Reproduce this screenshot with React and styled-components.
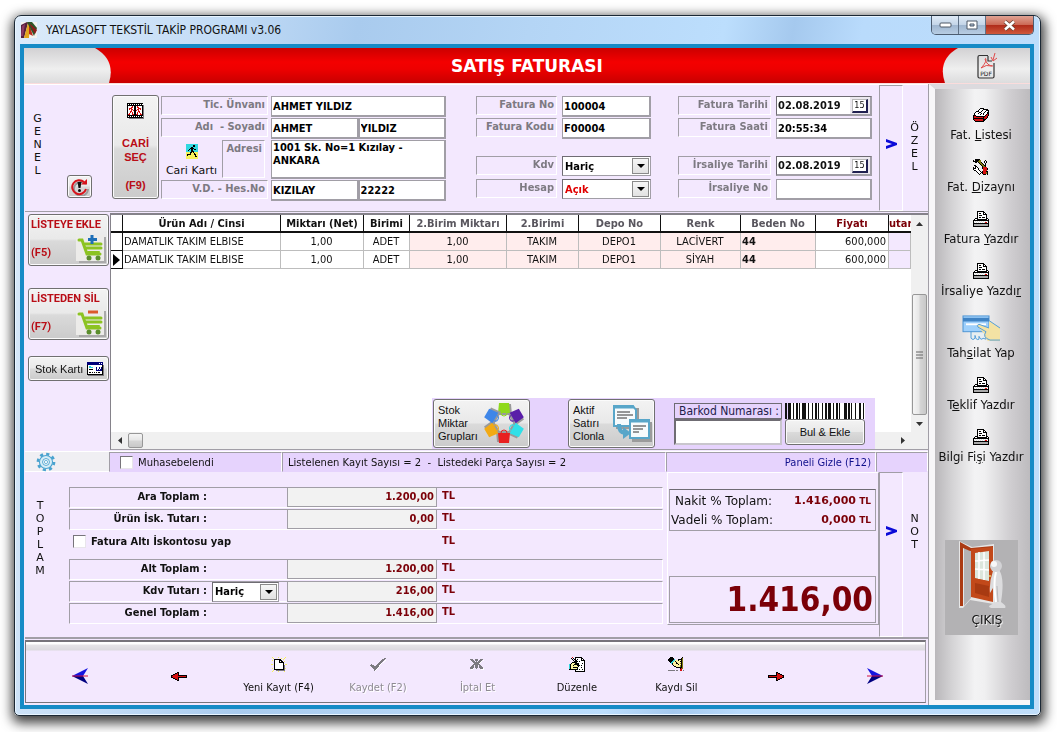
import React from 'react'
import styled, { createGlobalStyle } from 'styled-components'

const tahoma = `'DejaVu Sans Condensed', 'Noto Sans', sans-serif`
const verdana = `'DejaVu Sans', 'Noto Sans', sans-serif`
const arial = `'Liberation Sans', sans-serif`
const narrow = `Roboto, 'Liberation Sans', sans-serif`

const lilac = '#f3e8fe'
const violet = '#e6d3fd'
const line = '#a19ea6'
const maroon = '#7b0008'

const GlobalStyle = createGlobalStyle`
    * {
        box-sizing: border-box;
    }
    body {
        margin: 0;
        padding: 15px 16px 16px 14px;
        background: #fff;
        font-family: ${tahoma};
        font-size: 11px;
        color: #111;
    }
    button, input, select, textarea {
        font: inherit;
        color: inherit;
        margin: 0;
    }
`

/* ---------- window frame ---------- */

const Window = styled.div`
    border: 1px solid #1b2835;
    border-radius: 7px 7px 5px 5px;
    padding: 0 6px 6px 5px;
    background: linear-gradient(100deg, #dcebfa 0, #c3dcf6 18%, #a9cbee 30%, #b4d5f5 45%, #bcdefd 62%, #a5c9ee 68%, #b9dbfc 74%, #c0defa);
    box-shadow: inset 0 0 0 1px #e9f5ff, 1px 4px 12px 3px rgba(0, 0, 0, 0.75);
`

const TitleBar = styled.header`
    display: flex;
    align-items: center;
    height: 28px;
    gap: 9px;
    padding-left: 1px;
`

const WindowTitle = styled.h1`
    flex: 1;
    margin: 0;
    font-size: 12px;
    font-weight: 400;
`

const WindowButtons = styled.div`
    display: flex;
    align-self: flex-start;
    border: 1px solid #4c5c70;
    border-top: 0;
    border-radius: 0 0 5px 5px;
    overflow: hidden;
`

const WindowButton = styled.button`
    display: flex;
    align-items: center;
    justify-content: center;
    width: ${props => props.$close ? '47px' : '27px'};
    height: 18px;
    padding: 0;
    border: 0;
    border-right: ${props => props.$close ? '0' : '1px solid #5f7187'};
    background: ${props => props.$close
        ? 'linear-gradient(#e0a394, #cc6a56 48%, #b02c1a 52%, #d0583c)'
        : 'linear-gradient(#dfeaf6, #c4d5e8 48%, #9fb6d0 52%, #b8cde3)'};
`

const Client = styled.div`
    border: 4px solid #168bc6;
    background: ${lilac};
`

const Banner = styled.div`
    display: flex;
    justify-content: space-between;
    align-items: center;
    height: 36px;
    border-bottom: 1px solid #fbdcdc;
    background: linear-gradient(#cb0000, #f40000 40%, #ee0000 60%, #c80000);
`

const BannerTitle = styled.h2`
    margin: 0;
    font-family: ${verdana};
    font-size: 17px;
    color: #fff;
`

const PdfButton = styled.button`
    padding: 0;
    border: 0;
    background: none;
    display: block;
    height: 35px;
`

const Body = styled.div`
    display: grid;
    grid-template-columns: minmax(0, 1fr) 101px;
`

const Main = styled.main`
    padding-left: 1px;
    border-right: 1px solid ${line};
`

/* ---------- small shared parts ---------- */

const SideWord = styled.div`
    font-family: ${verdana};
    font-size: 11px;
    line-height: 13px;
    text-align: center;
    width: ${props => props.$width};
    padding-top: ${props => props.$top};

    & span {
        display: block;
    }
`

const Fold = styled.button`
    width: 24px;
    padding: 0 0 ${props => props.$lift || '6px'};
    border: 1px solid;
    border-color: ${line} #fff #fff ${line};
    background: ${lilac};
`

const RaisedButton = styled.button`
    border: 1px solid #707070;
    border-radius: 3px;
    background: linear-gradient(#f3f3f3, #e9e9e9 48%, #dadada 52%, #cbcbcb);
    box-shadow: inset 0 0 0 1px #fbfbfb;
    padding: 0;
`

const Caption = styled.label`
    display: block;
    height: ${props => props.$tall ? '38px' : '19px'};
    border: 1px solid;
    border-color: ${line} #fff #fff ${line};
    padding: 0 2px;
    text-align: right;
    font-weight: 700;
    line-height: 16px;
    color: #7d7a82;
    white-space: pre;
`

const TextBox = styled.input`
    width: 100%;
    min-width: 0;
    height: ${props => props.$tall ? '39px' : '21px'};
    border: 1px solid ${line};
    border-width: 1px 2px 2px 1px;
    border-radius: 0;
    background: #fff;
    padding: 0 1px;
    font-weight: 700;
    color: #000;
    line-height: 13px;
    resize: none;
    display: block;
    outline: none;
    overflow: hidden;
`

const SelectWrap = styled.div`
    position: relative;
    width: ${props => props.$width || '100%'};

    & select {
        appearance: none;
        display: block;
        width: 100%;
        height: 20px;
        border: 1px solid;
        border-color: #6f6c73 ${line} ${line} #6f6c73;
        border-radius: 0;
        background: #fff;
        padding: 0 20px 0 2px;
        font-weight: 700;
        color: ${props => props.$red ? '#e00000' : '#000'};
    }
`

const DropArrow = styled.span`
    position: absolute;
    top: 2px;
    right: 2px;
    width: 17px;
    height: 16px;
    border: 1px solid #8a8a8a;
    background: linear-gradient(#f6f6f6, #e2e2e2);
    pointer-events: none;

    &::after {
        content: "";
        position: absolute;
        left: 4px;
        top: 5px;
        border: 4px solid transparent;
        border-top-color: #000;
        border-bottom: 0;
    }
`

const DateBox = styled.div`
    display: flex;
    height: 20px;
    border: 1px solid;
    border-width: 1px 2px 2px 1px;
    border-color: #6f6c73 ${line} ${line} #6f6c73;
    background: #fff;

    & input {
        flex: 1;
        min-width: 0;
        border: 0;
        padding: 0 1px;
        font-weight: 700;
        background: none;
    }
`

const DayButton = styled.button`
    width: 20px;
    border: 0;
    padding: 1px 2px;
    background: #ece9ef;

    & span {
        display: block;
        border: 1px solid #bbb;
        border-width: 1px 2px 2px 1px;
        border-color: #bbb #202050 #202050 #bbb;
        background: #fff;
        font-size: 9px;
        line-height: 11px;
    }
`

/* ---------- invoice head ---------- */

const Head = styled.section`
    display: flex;
    height: 128px;
    padding-right: 2px;
    border-top: 1px solid #fff;
    border-bottom: 1px solid ${line};
`

const HeadLeft = styled.div`
    display: flex;
    width: 87px;
`

const RefreshButton = styled(RaisedButton)`
    width: 25px;
    height: 23px;
    align-self: flex-end;
    margin: 0 0 13px 17px;
    line-height: 0;
`

const PickButton = styled(RaisedButton)`
    width: 47px;
    height: 104px;
    margin-top: 10px;
    font-family: ${arial};
    font-weight: 700;
    line-height: 14px;
    color: #b90d16;

    & svg {
        display: block;
        margin: 0 auto 17px;
    }
`

const HeadGroup = styled.div`
    flex: ${props => props.$grow};
    display: flex;
    flex-direction: column;
    gap: 1px;
    min-width: 0;
    margin-left: ${props => props.$left};
    padding-top: 11px;
`

const FormRow = styled.div`
    display: grid;
    grid-template-columns: ${props => props.$label} minmax(0, 1fr);
    column-gap: ${props => props.$gap || '5px'};
    min-height: 21px;
    margin-top: ${props => props.$apart ? '16px' : '0'};
    padding-bottom: ${props => props.$loose ? '2px' : '0'};
`

const AddressCaption = styled.div`
    display: grid;
    grid-template-columns: 61px 43px;
`

const CardLink = styled.a`
    font-family: ${verdana};
    font-size: 11px;
    line-height: 14px;
    color: #111;
    text-align: center;
    text-decoration: none;
    white-space: nowrap;

    & svg {
        display: block;
        margin: 4px auto 5px;
    }
`

const Pair = styled.div`
    display: grid;
    grid-template-columns: 1fr 1fr;
`

const FoldGap = styled.div`
    width: 7px;
`

/* ---------- goods list ---------- */

const ListArea = styled.section`
    display: grid;
    grid-template-columns: 85px minmax(0, 1fr);
    height: 239px;
`

const ListActions = styled.div`
    display: flex;
    flex-direction: column;
    align-items: stretch;
    padding: 2px 1px 0 3px;
`

const CartButton = styled(RaisedButton)`
    position: relative;
    height: 52px;
    margin-bottom: 22px;
    padding: 2px 2px 4px;
    text-align: left;
    font-family: ${narrow};
    font-weight: 700;
    line-height: 14px;
    color: #b90d16;
    white-space: nowrap;

    & em {
        display: block;
        margin-top: 14px;
        font-style: normal;
    }

    & svg {
        position: absolute;
        right: 2px;
        bottom: 2px;
    }
`

const StockButton = styled(RaisedButton)`
    display: flex;
    align-items: center;
    justify-content: space-between;
    height: 25px;
    margin-top: -6px;
    padding: 0 4px 0 6px;
    font-family: ${arial};
    white-space: nowrap;
`

const ListBox = styled.div`
    position: relative;
    display: grid;
    grid-template-columns: minmax(0, 1fr) 17px;
    grid-template-rows: 1fr 17px;
    margin: 1px 0;
    border: 1px solid #85828a;
    border-width: 2px 0 0 1px;
    border-bottom: 1px solid ${line};
    background: #fff;
`

const TableClip = styled.div`
    overflow: hidden;
`

const GoodsTable = styled.table`
    width: 100%;
    table-layout: fixed;
    border-spacing: 0;
    line-height: 15px;

    & th {
        height: 18px;
        padding: 0;
        border-right: 1px solid #111;
        border-bottom: 2px solid #111;
        overflow: hidden;
        white-space: nowrap;
    }

    & th:last-child {
        border-right: 0;
        text-align: left;
    }

    & td {
        height: 18px;
        padding: 0 2px 0 1px;
        border-right: 1px solid #bdbdbd;
        border-bottom: 1px solid #bdbdbd;
        text-align: center;
        white-space: nowrap;
    }
`

const HeadCell = styled.th`
    color: ${props => props.$color || '#111'};
`

const Cell = styled.td`
    && {
        text-align: ${props => props.$align || 'center'};
        font-weight: ${props => props.$bold ? 700 : 400};
        background: ${props => props.$fill || '#fff'};
    }
`

const Marker = styled.td`
    && {
        border-right: 1px solid #111;
        border-bottom-color: #111;
        padding: 0;
    }
    & svg {
        display: block;
        margin: 0 auto;
    }
`

const ScrollColumn = styled.div`
    display: flex;
    flex-direction: column;
    align-items: stretch;
    background: #f0f0f0;
`

const ScrollRow = styled.div`
    display: flex;
    background: #f0f0f0;
`

const ScrollButton = styled.button`
    width: 17px;
    height: 17px;
    border: 0;
    padding: 0;
    background: none;
    line-height: 0;
`

const Thumb = styled.div`
    flex: none;
    border: 1px solid #979797;
    border-radius: 2px;
    background: linear-gradient(${props => props.$vertical ? '90deg, ' : ''}#f5f5f5, #e6e6e6 48%, #d6d6d6 52%, #c8c8c8);
    width: 15px;
    height: ${props => props.$vertical ? '121px' : '15px'};
    margin: ${props => props.$vertical ? '0 1px' : '1px 0'};
    display: flex;
    align-items: center;
    justify-content: center;
`

const Gap = styled.div`
    flex: 1;
`

const FloatPanel = styled.div`
    position: absolute;
    right: 53px;
    bottom: 0;
    display: flex;
    align-items: flex-start;
    width: 443px;
    height: 51px;
    padding: 1px 10px 0 1px;
    background: ${violet};
`

const PictureButton = styled(RaisedButton)`
    display: flex;
    align-items: center;
    justify-content: space-between;
    width: ${props => props.$width};
    height: 49px;
    padding: 0 2px 0 4px;
    text-align: left;
    font-family: ${arial};
    font-size: 11px;
    line-height: 13px;
    margin-right: ${props => props.$right};
`

const BarcodeForm = styled.div`
    flex: 1;
    display: grid;
    grid-template-columns: 108px minmax(0, 1fr);
    grid-template-rows: 16px 26px;
    column-gap: 3px;
    margin-top: 4px;

    & label {
        border: 1px solid #6f6c73;
        padding-left: 4px;
        font-size: 12px;
        line-height: 14px;
        color: #22204a;
        white-space: nowrap;
    }

    & input {
        width: 100%;
        border: 2px solid #6f6c73;
        border-right-color: #c9c6cd;
        border-bottom-color: #c9c6cd;
        background: #fff;
    }

    & button {
        font-family: ${arial};
    }
`

/* ---------- status line ---------- */

const StatusLine = styled.section`
    display: grid;
    grid-template-columns: 84px 173px minmax(0, 385fr) 210px 52px;
    height: 21px;
    border-top: 1px solid #fff;
    border-bottom: 1px solid #fff;
    background: #f0eff3;
    font-family: ${verdana};
    font-size: 10px;
`

const StatusCell = styled.div`
    display: flex;
    align-items: center;
    gap: 5px;
    padding: 0 4px 0 5px;
    border: 1px solid;
    border-color: ${line} #fff ${violet} ${line};
    background: ${violet};
    white-space: nowrap;

    & a {
        margin-left: auto;
        font-family: ${tahoma};
        font-size: 11px;
        color: #10108c;
        text-decoration: none;
    }
`

const GearButton = styled.button`
    border: 0;
    padding: 0 0 0 10px;
    background: none;
    text-align: left;
    line-height: 0;
`

const Tick = styled.input`
    appearance: none;
    width: 13px;
    height: 13px;
    border: 1px solid;
    border-color: #77747b #e8e5ea #e8e5ea #77747b;
    background: #fff;
    margin-left: ${props => props.$left || '0'};
`

/* ---------- totals ---------- */

const Totals = styled.section`
    display: flex;
    height: 167px;
    padding-right: 2px;
    border-bottom: 2px solid ${line};
`

const Sums = styled.div`
    flex: 1;
    min-width: 0;
    margin: 15px 4px 0 14px;
`

const SumRow = styled.div`
    display: grid;
    grid-template-columns: 137px 80px 150px minmax(0, 1fr);
    align-items: stretch;
    height: 21px;
    margin-bottom: 1px;
    border: 1px solid;
    border-color: ${line} #fff #fff ${line};
    font-weight: 700;
    line-height: 18px;
`

const SumName = styled.label`
    text-align: right;
    color: #111;
    white-space: nowrap;
`

const SumValue = styled.output`
    border: 1px solid ${line};
    border-width: 0 1px 1px 1px;
    background: #f2f2f2;
    padding-right: 2px;
    text-align: right;
    color: ${maroon};
    line-height: 17px;
`

const Unit = styled.span`
    padding-left: 5px;
    color: ${maroon};
    line-height: 16px;
`

const SumSelect = styled.div`
    padding-left: 5px;
`

const DiscountRow = styled.div`
    display: flex;
    align-items: center;
    height: 28px;
    padding: 0 0 8px 4px;
    font-weight: 700;

    & label {
        width: 351px;
        padding-left: 5px;
    }
`

const Summary = styled.div`
    display: flex;
    flex-direction: column;
    justify-content: space-between;
    width: 212px;
    height: 153px;
    padding: 16px 2px 1px 1px;
    border: 1px solid;
    border-color: #fff ${line} ${line} #fff;
`

const Terms = styled.dl`
    display: grid;
    grid-template-columns: 1fr auto 15px;
    margin: 0;
    padding: 2px 4px 0 1px;
    height: 42px;
    border: 1px solid ${line};
    border-top-color: #6f6c73;
    line-height: 18px;
    font-family: ${verdana};
    white-space: nowrap;

    & dt {
        font-size: 12px;
    }

    & dt:first-child {
        padding-left: 4px;
    }

    & dd {
        margin: 0;
        font-weight: 700;
        color: ${maroon};
        text-align: right;
    }

    & dd + dd {
        font-size: 9px;
    }
`

const Grand = styled.output`
    display: block;
    height: 47px;
    padding-right: 2px;
    border: 1px solid ${line};
    text-align: right;
    font-weight: 700;
    font-size: 33px;
    line-height: 46px;
    color: ${maroon};
`

/* ---------- record toolbar ---------- */

const Toolbar = styled.nav`
    display: flex;
    height: 63px;
    margin: 1px 2px 2px 0;
    padding-left: 4px;
    border: 1px solid #77747b;
    border-top: 2px solid #77747b;
    border-right-color: ${line};
    background: linear-gradient(#fff 0, #fff 2px, #e6e4e8 3px, #dcdadf 8px, ${lilac} 9px);
`

const ToolButton = styled.button`
    flex: 1;
    display: grid;
    grid-template-rows: ${props => props.$bare ? '16px' : '16px 14px'};
    gap: 9px;
    align-content: start;
    align-items: center;
    justify-items: center;
    padding: ${props => props.$bare ? '26px 0 0' : '14px 0 0'};
    border: 0;
    background: none;
    font-size: 11px;
    line-height: 14px;
    white-space: nowrap;
    color: #111;

    &:disabled {
        color: #8e8b92;
        text-shadow: 1px 1px 0 #fff;
    }
`

/* ---------- right side menu ---------- */

const Side = styled.aside`
    display: flex;
    flex-direction: column;
    align-items: center;
    gap: 16px;
    padding: 18px 3px 0 0;
    border: 5px solid #f7f6f8;
    border-left-width: 6px;
    border-right: 0;
    border-top-color: #dcdade;
    background: linear-gradient(90deg, #b9b7ba, #d4d3d5 18%, #f3f3f4 42%, #f0f0f1 52%, #cfcdd0 80%, #bdbbbe);
`

const SideItem = styled.button`
    display: grid;
    justify-items: center;
    gap: 4px;
    padding: 0;
    border: 0;
    background: none;
    font-size: 13px;
    line-height: 16px;
    white-space: nowrap;
    color: #111;

    & svg {
        display: block;
    }
`

const ExitButton = styled.button`
    display: grid;
    justify-items: center;
    width: 73px;
    height: 95px;
    margin-top: 59px;
    padding: 0 0 7px 12px;
    border: 0;
    background: #b3b2b4;
    font-family: ${verdana};
    font-size: 12px;
    line-height: 14px;
    text-shadow: 1px 1px 1px #fff;

    & svg {
        display: block;
        margin-left: -12px;
    }
`

/* ---------- drawings ---------- */

const inks = {
    k: '#000', w: '#fff', g: '#a9a9a9', l: '#dcdcdc', r: '#d61010', y: '#f7f25a',
    c: '#30d8e0', s: '#fbf3a0', d: '#7c7a80', o: '#7f7a10', b: '#1010d0', n: '#000078',
}

// Small bitmap icons: one letter per pixel, a dot leaves the pixel clear.
const Bitmap = ({ rows }) => (
    <svg width={rows[0].length} height={rows.length} shapeRendering="crispEdges" aria-hidden="true">
        {rows.map((row, y) => row.split('').map((ink, x) => (
            ink === '.' ? null : <rect key={`${x}-${y}`} x={x} y={y} width="1" height="1" fill={inks[ink]} />
        )))}
    </svg>
)

const printer = [
    '....kkkkkkk.....',
    '....kwwwwwkk....',
    '....kwkkwwkwk...',
    '....kwwwwwkkkk..',
    '....kwkkkwwwwk..',
    '....kwwwwwwwwk..',
    '....kwkkwkkkwk..',
    '..kkkwwwwwwwwkk.',
    '.kwwkkkkkkkkkkwk',
    'kkkkkkkkkkkkkkkk',
    'kwlwlwlwlwlwlwlk',
    'klwlwlwlwlwlrrwk',
    'kkkkkkkkkkkkkkkk',
    'kggggggggggggggk',
    'kggggggggggggggk',
    'kkkkkkkkkkkkkkkk',
]

const cardTray = [
    '................',
    '.......kkkk.....',
    '......kwwwkkkkk.',
    '.....kwwwkwwwkkk',
    '...kkkwwkwwwkwwk',
    '..kwwwkkwwwkwwkk',
    '.kwwwkwwkwkwwwkk',
    '.kwwwwwkwwkwwkrk',
    'kkkwwwwwwwwwkrrk',
    'krrkkkkkkkkkrrk.',
    'krrrrrrrrrkrrrk.',
    'kkkkkkkkkkkrrk..',
    'krrrrrrrrrkkk...',
    '.krrrrrrrrkk....',
    '..kkkkkkkkk.....',
    '................',
]

const tools = [
    '..kkkkk.........',
    'kwkkkkoo....k...',
    'kkkkkooo...k.k..',
    '..kk.kook..k.k..',
    '......kook..k...',
    '.......kook.k...',
    '.kk.....kookk...',
    '..kk.....kook...',
    'k.kwk....krrrr..',
    'kkkwwk...krrrrk.',
    'kwwwwk....rrrrk.',
    '.kkwwwk...rrrr..',
    '...kwwwk.krrrkk.',
    '....kwwwkkrrrok.',
    '.....kwk.krrrok.',
    '......k...kkk.k.',
]

const newPage = [
    '.y.....y......y.',
    '..y.......y..y..',
    '...kkkkkkk..y...',
    '.y.kwwwwkkk.....',
    '...kwwwwkwkk.y..',
    '...kwwwwkkkkk...',
    '...kwwwwwwwwk...',
    'yy.kwwwwwwwwk.yy',
    '...kwwwwwwwwkd..',
    '...kwwwwwwwwkd..',
    '...kwwwwwwwwkd..',
    '.y.kwwwwwwwwkdy.',
    '...kkkkkkkkkkd..',
    '..y..ddddddddd..',
    '.y.....y.....y..',
]

const check = [
    '..............dd',
    '............ddd.',
    '...........ddd.w',
    '..........ddd.w.',
    '.........ddd.w..',
    '........dddw....',
    '.d.....dddw.....',
    'dddd..dddw......',
    '.ddddddddw......',
    '..ddddddw.......',
    '...ddddw........',
    '....ddw.........',
    '....dw..........',
]

const cancel = [
    'ddd..ddd..ddd.',
    '.ddd.ddd.ddd.w',
    '..ddd.d.dddw..',
    '...dddddddw...',
    '....dddddw....',
    '...ddddddd....',
    '..dd.ddd.dd...',
    '.ddd.ddd.ddd..',
    'dddd.ddd.dddd.',
    'dddw..d...dddw',
    '.ww........www',
]

const edit = [
    '...r..kkkkkkk...',
    '..k.k.kwwwwwkk..',
    '...k.kkwkwwwkwk.',
    '....k.kkwwwwkkkk',
    '.....kkkkwkwwwwk',
    '...kkkkkwwwwwwwk',
    '..kssskkkkwwwkwk',
    'ckssskkkkkwwwwwk',
    'cksskssskkkwkwwk',
    'ckssssssskwwwwwk',
    'cksskkkkkwwwkwwk',
    'cksssssskwwwwwwk',
    'kkkkkkkkkwkwwkwk',
    '......kwwwwwwwwk',
    '......kkkkkkkkkk',
]

const erase = [
    '..kkk.........k.',
    '.kkkkk.......ko.',
    'kkkkkkc...kkkko.',
    'kkkkkccssskssko.',
    '.kkkccsksssskko.',
    '..kccssskssssko.',
    '...ckssskkssoko.',
    '....kssssskssko.',
    '.....kssssssoko.',
    '......kkssssoko.',
    '........kkkkkko.',
    '............kro.',
    '............rr..',
    'ddddddd.dd..rr.d',
]

const arrowLeft = [
    '......kk........',
    '....kkrk........',
    '..kkrrrk........',
    'kkrrrrrkkkkkkkkk',
    'krrrrrrrrrrrrrrk',
    'kkrrrrrkkkkkkkkk',
    '..kkrrrk........',
    '....kkrk........',
    '......kk........',
]

const walker = [
    'cccccccccccc',
    'ccccccckkccc',
    'ccccccckkccc',
    'ccccckkccccc',
    'cccckkkkcccc',
    'ccckckkckkcc',
    'cckcckkccccc',
    'ccccckkkcccc',
    'yyyykkykyyyy',
    'yyyykyyykyyy',
    'ykkkkyyykkyy',
    'ykyyyyyyykyy',
    'yyyyyyyyykky',
    'yyyyyyyyyyyy',
    'yyyyyyyyyyyy',
]

const film = [
    'kkkkkkkkkkkkkkkk..',
    'kwkwkwkwkwkwkwkw..',
    'kkkkkkkkkkkkkkkkd.',
    'kwwwwrwkkwrwwwwkd.',
    'kwwwrrwkkwrrwwwkd.',
    'kwrrrwwkkwwrrrwkd.',
    'kwrwrrwkkwrrwrwkd.',
    'kwwwrwrkkrwrwwwkd.',
    'kwwrrwwkkwwrrwwkd.',
    'kwwrwrwkkwrwrwwkd.',
    'kwrwwrwkkwrwwrwkd.',
    'krrwwrrkkrrwwrrkd.',
    'kkkkkkkkkkkkkkkkd.',
    'kwkwkwkwkwkwkwkwd.',
    'kkkkkkkkkkkkkkkkd.',
    '..ddddddddddddddd.',
]

const stockCard = [
    'nnnnnnnnnnnnnnnn.',
    'nnnnnnnnnnnnwnwn.',
    'nnnnnnnnnnnnnnnn.',
    'kwwwwwwwwwwwwwwkd',
    'kwccwwwwwwwwwwwkd',
    'kwccccwwwnwwnwnkd',
    'kwwwwwwwwnwwnwnkd',
    'kwkkkkwwwnwnwnnkd',
    'kwwwwwwwwnnnnnnkd',
    'kwwwwwwwwwwwwwwkd',
    'kwkkwkwkwkwkkwwkd',
    'kwwwwwwwwwwwwwwkd',
    'kkkkkkkkkkkkkkkkd',
    '.dddddddddddddddd',
]

const mirror = rows => rows.map(row => row.split('').reverse().join(''))

const AppIcon = () => (
    <svg width="16" height="16" aria-hidden="true">
        <rect width="16" height="16" fill="#f4f2ee" />
        <path d="M0 3 6 0 7 1 3 16H0Z" fill="#55203c" />
        <path d="M7 1 3 16h5l1-14Z" fill="#e2a51c" />
        <path d="M8 1 8 12l4 2Z" fill="#b92a1c" />
        <path d="M6 0h5l5 6-3 8Z" fill="#2f5428" />
        <path d="M8 1 16 8l-2 4Z" fill="#8e1b1b" />
        <path d="M1 4 4 2 2 14H0Z" fill="#8d3a64" />
    </svg>
)

const FastArrow = ({ flip }) => (
    <svg width="16" height="16" aria-hidden="true">
        <g transform={flip ? 'translate(16 0) scale(-1 1)' : undefined}>
            <path d="M0 8 16 0 11 8Z" fill="#1414e0" />
            <path d="M0 8 16 16 11 8Z" fill="#000080" />
            <path d="M0 8H16" stroke="#d01040" />
        </g>
    </svg>
)

const Chevron = () => (
    <svg width="12" height="10" aria-hidden="true">
        <path d="M1 0 12 4V6L1 10V7L7 5 1 3Z" fill="#0a0ad8" />
    </svg>
)

const Refresh = () => (
    <svg width="18" height="18" viewBox="0 0 18 18" aria-hidden="true">
        <path d="M14 5A7 7 0 1 0 16 10" fill="none" stroke="#9c9c9c" strokeWidth="2" transform="translate(1 1)" />
        <path d="M13 4A7 7 0 1 0 15 11" fill="none" stroke="#d8141c" strokeWidth="2" />
        <path d="M10 6.500h6V1Z" fill="#d8141c" />
        <path d="M6.500 4h4L9.500 10H7.500Z" fill="#111" />
        <circle cx="8.500" cy="12.500" r="1.500" fill="#111" />
    </svg>
)

const Cart = ({ add }) => (
    <svg width="30" height="28" viewBox="0 0 30 28" aria-hidden="true">
        <path d="M3 2H30V28H3Z" fill="#aaa" />
        <path d="M0 0H28V26H0Z" fill="#ecebe9" />
        <g fill="none" stroke="#8cc322" strokeWidth="3" strokeLinecap="round">
            <path d="M3 5H6L11 19H24" />
            <path d="M9 9H25" />
            <path d="M10 13H25" />
            <path d="M12 17H23" strokeWidth="2" />
        </g>
        <circle cx="13" cy="23" r="2.500" fill="#5b8d2d" />
        <circle cx="22" cy="23" r="2.500" fill="#5b8d2d" />
        {add
            ? <path d="M16 0v9M12 4.500h9" stroke="#1d6fb8" strokeWidth="3" />
            : <path d="M12 3h10" stroke="#dc5a2c" strokeWidth="3" />}
    </svg>
)

const Gear = () => (
    <svg width="22" height="20" viewBox="-11 -11 22 22" fill="none" stroke="#4aa3cf" aria-hidden="true">
        <circle r="8.800" strokeWidth="3" strokeDasharray="3.450 3.450" />
        <circle r="7.200" fill="#d7edf7" strokeWidth="1.200" />
        <circle r="3.800" fill="#f3f8fb" strokeWidth="1" />
        <circle r="1.800" strokeWidth="0.800" />
    </svg>
)

const BannerLeft = () => (
    <svg width="88" height="35" aria-hidden="true">
        <defs>
            <linearGradient id="tab" x1="0" y1="0" x2="0" y2="1">
                <stop offset="0" stopColor="#d2d1d3" />
                <stop offset="0.6" stopColor="#efefef" />
                <stop offset="1" stopColor="#dcdcdd" />
            </linearGradient>
        </defs>
        <path d="M0 0H71Q92 12 85 35H0Z" fill="url(#tab)" />
    </svg>
)

const BannerRight = () => (
    <svg width="88" height="35" aria-hidden="true">
        <path d="M88 0H16Q-5 12 3 35H88Z" fill="url(#tab)" />
        <g fill="none" stroke="#333" strokeWidth="1.200">
            <path d="M46 7.500H37.500Q36 7.500 36 9V28.500Q36 30 37.500 30H50.500Q52 30 52 28.500V15" />
            <path d="M46 8V13H50" />
        </g>
        <path d="M43 10C45 11 44 15 39 20M43 11Q45 18 51 18M39 20Q44 16 50 18M51 12l2-7M49 9l2 4 4-3" fill="none" stroke="#e04848" />
        <text x="44" y="28" textAnchor="middle" fontSize="6" fontFamily="DejaVu Sans, sans-serif" fill="#222">PDF</text>
    </svg>
)

const CardHand = () => (
    <svg width="38" height="26" viewBox="0 0 38 28" preserveAspectRatio="none" aria-hidden="true">
        <path d="M9 17v8q2 3 4 0v-3q1 6 4 4v-3q2 5 4 2l3 1-2-9Z" fill="#e8eef0" stroke="#4e9bd8" />
        <rect x="1" y="1" width="26" height="17" fill="#9fd0fb" stroke="#4a92d2" />
        <path d="M1 3h26v4H1Z" fill="#3f83c4" />
        <path d="M4 10h20" stroke="#fff" strokeWidth="2" />
        <path d="M16 13q-2-2 1-3l10 4V6l11 8v14H26q-3-2-4-8Z" fill="#f3e2a4" />
        <path d="M27 6 38 14M16 13q-2-2 1-3l10 4M16 13l8 5q-4 6 4 9h10" fill="none" stroke="#4e9bd8" />
    </svg>
)

const bags = ['#8fd91c', '#5a1ea8', '#30e0e8', '#e82020', '#f2aa14', '#3f86e8']

const BagRing = () => (
    <svg width="46" height="45" viewBox="-23 -22 46 45" aria-hidden="true">
        {bags.map((color, i) => (
            <g key={color} transform={`rotate(${i * 60}) translate(0 -15)`}>
                <path d="M-4-4H7L8 7H-5Z" fill="#9a9a9a" />
                <path d="M-5-5H5L6 5H-6Z" fill={color} />
                <path d="M-3 5a3 3 0 0 0 6 0" fill="none" stroke={color} />
            </g>
        ))}
    </svg>
)

const ClonePages = () => (
    <svg width="39" height="37" aria-hidden="true">
        <path d="M3 3H26V24H3ZM19 17H39V37H19Z" fill="#9b9b9b" />
        <g fill="#f7fbfd" stroke="#58a6c9" strokeWidth="2">
            <path d="M1 1H20L23 5V21H1Z" />
            <path d="M17 15H36V33H17Z" />
        </g>
        <path d="M1 2H21M17 16H36" stroke="#58a6c9" strokeWidth="3" />
        <path d="M4 7H17M4 10H20M4 13H14M20 21H33M20 24H30M20 27H26" stroke="#333" />
        <path d="M6 19Q6 28 12 28" fill="none" stroke="#58a6c9" strokeWidth="4" />
        <path d="M10 22 18 28 10 34Z" fill="#58a6c9" />
    </svg>
)

const bars = [0, 3, 8, 11, 14, 17, 19, 23, 27, 30, 33, 37, 40, 43, 48, 51, 54, 59, 63, 66, 70, 74, 78]

const Barcode = () => (
    <svg width="80" height="16" shapeRendering="crispEdges" aria-hidden="true">
        <rect x="3" width="77" height="16" fill="#fff" />
        {bars.map((x, i) => <rect key={x} x={x} width={i % 3 === 0 ? 2 : i % 4 === 1 ? 3 : 1} height="16" fill="#111" />)}
    </svg>
)

const Door = () => (
    <svg width="52" height="71" viewBox="0 0 52 71" aria-hidden="true">
        <path d="M4 1 17 7 39 4V64L15 60 8 68H4Z" fill="#f2f2f2" opacity="0.800" />
        <path d="M9 8 16 11V58L9 66Z" fill="#b3b2b4" />
        <path d="M5 2 16 8 38 6V8L15 11 8 8V66H5Z" fill="#ab3b14" />
        <path d="M16 9 38 7V62L16 57Z" fill="#c2491a" />
        <path d="M20 13 34 11V41L20 38Z" fill="#dce6dc" />
        <path d="M24 12V39M29 12V40M20 21 34 20M20 29 34 30" stroke="#fff" strokeWidth="1.500" />
        <path d="M20 43 34 46V57L20 53Z" fill="#a83a12" />
        <circle cx="35" cy="36" r="1" fill="#ecd06a" />
        <path d="M38 31Q34 42 35 53L38 48 39 63 34 66Q34 68 38 68H50Q52 66 46 62Q50 38 44 30Z" fill="#dcdcde" />
        <path d="M41 32Q38 42 41 62" fill="none" stroke="#fff" strokeWidth="2" />
        <path d="M42 46 43 62" stroke="#b9b9bc" />
        <circle cx="41" cy="26" r="6" fill="#d2d2d5" />
        <circle cx="39" cy="24" r="3" fill="#f7f7f8" />
    </svg>
)

const Triangle = ({ points, size = 7 }) => (
    <svg width={size} height={size} aria-hidden="true"><path d={points} fill="#333" /></svg>
)

/* ---------- data ---------- */

const pink = '#ffeded'
const grey = '#59565e'

const columns = [
    { title: 'Ürün Adı / Cinsi', align: 'left' },
    { title: 'Miktarı (Net)', width: 83 },
    { title: 'Birimi', width: 46 },
    { title: '2.Birim Miktarı', width: 97, color: grey, fill: pink },
    { title: '2.Birimi', width: 72, color: grey, fill: pink },
    { title: 'Depo No', width: 82, color: grey, fill: pink },
    { title: 'Renk', width: 80, color: grey, fill: pink },
    { title: 'Beden No', width: 75, color: grey, fill: pink, align: 'left', bold: true },
    { title: 'Fiyatı', width: 73, color: maroon, align: 'right' },
    { title: 'utar', width: 22, color: maroon, fill: lilac },
]

const goods = [
    ['DAMATLIK TAKIM ELBISE', '1,00', 'ADET', '1,00', 'TAKIM', 'DEPO1', 'LACİVERT', '44', '600,000', ''],
    ['DAMATLIK TAKIM ELBISE', '1,00', 'ADET', '1,00', 'TAKIM', 'DEPO1', 'SİYAH', '44', '600,000', ''],
]

const sideItems = [
    { text: <>Fat. <u>L</u>istesi</>, icon: <Bitmap rows={cardTray} /> },
    { text: <>Fat. <u>D</u>izaynı</>, icon: <Bitmap rows={tools} /> },
    { text: <>Fatura <u>Y</u>azdır</>, icon: <Bitmap rows={printer} /> },
    { text: <>İrsaliye Yazdı<u>r</u></>, icon: <Bitmap rows={printer} /> },
    { text: <>Tah<u>s</u>ilat Yap</>, icon: <CardHand /> },
    { text: <>T<u>e</u>klif Yazdır</>, icon: <Bitmap rows={printer} /> },
    { text: <>Bilgi Fi<u>ş</u>i Yazdır</>, icon: <Bitmap rows={printer} /> },
]

const Letters = ({ word, width, top }) => (
    <SideWord $width={width} $top={top}>
        {word.split('').map((letter, i) => <span key={i}>{letter}</span>)}
    </SideWord>
)

const Select = ({ id, options, value, red, width, label }) => (
    <SelectWrap $red={red} $width={width}>
        <select id={id} defaultValue={value} aria-label={label}>
            {options.map(option => <option key={option}>{option}</option>)}
        </select>
        <DropArrow />
    </SelectWrap>
)

const DateField = ({ id, value }) => (
    <DateBox>
        <input id={id} defaultValue={value} />
        <DayButton type="button"><span>15</span></DayButton>
    </DateBox>
)

const Sum = ({ id, name, value, children }) => (
    <SumRow>
        <SumName htmlFor={id}>{name}</SumName>
        <div>{children}</div>
        <SumValue id={id}>{value}</SumValue>
        <Unit>TL</Unit>
    </SumRow>
)

const CustomerFields = () => (
    <HeadGroup $grow={285} $left="2px">
        <FormRow $label="107px" $gap="3px">
            <Caption htmlFor="unvan">Tic. Ünvanı</Caption>
            <TextBox id="unvan" defaultValue="AHMET YILDIZ" />
        </FormRow>
        <FormRow $label="107px" $gap="3px">
            <Caption htmlFor="ad">Adı  - Soyadı</Caption>
            <Pair>
                <TextBox id="ad" defaultValue="AHMET" />
                <TextBox aria-label="Soyadı" defaultValue="YILDIZ" />
            </Pair>
        </FormRow>
        <FormRow $label="107px" $gap="3px">
            <AddressCaption>
                <CardLink href="#cari"><Bitmap rows={walker} />Cari Kartı</CardLink>
                <Caption $tall htmlFor="adres">Adresi</Caption>
            </AddressCaption>
            <TextBox as="textarea" id="adres" $tall defaultValue={'1001 Sk. No=1 Kızılay -\nANKARA'} />
        </FormRow>
        <FormRow $label="107px" $gap="3px">
            <Caption htmlFor="vd">V.D. - Hes.No</Caption>
            <Pair>
                <TextBox id="vd" defaultValue="KIZILAY" />
                <TextBox aria-label="Hes.No" defaultValue="22222" />
            </Pair>
        </FormRow>
    </HeadGroup>
)

const InvoiceHead = () => (
    <Head>
        <HeadLeft>
            <Letters word="GENEL" width="25px" top="27px" />
            <RefreshButton type="button" aria-label="Yenile"><Refresh /></RefreshButton>
        </HeadLeft>
        <PickButton type="button"><Bitmap rows={film} />CARİ<br />SEÇ<br /><br />(F9)</PickButton>
        <CustomerFields />
        <HeadGroup $grow={175} $left="30px">
            <FormRow $label="81px">
                <Caption htmlFor="no">Fatura No</Caption>
                <TextBox id="no" defaultValue="100004" />
            </FormRow>
            <FormRow $label="81px">
                <Caption htmlFor="kod">Fatura Kodu</Caption>
                <TextBox id="kod" defaultValue="F00004" autoFocus onFocus={e => e.target.setSelectionRange(6, 6)} />
            </FormRow>
            <FormRow $label="81px" $apart $loose>
                <Caption htmlFor="kdv">Kdv</Caption>
                <Select id="kdv" options={['Hariç', 'Dahil']} value="Hariç" />
            </FormRow>
            <FormRow $label="81px">
                <Caption htmlFor="hesap">Hesap</Caption>
                <Select id="hesap" options={['Açık', 'Kapalı']} value="Açık" red />
            </FormRow>
        </HeadGroup>
        <HeadGroup $grow={194} $left="27px">
            <FormRow $label="93px">
                <Caption htmlFor="tarih">Fatura Tarihi</Caption>
                <DateField id="tarih" value="02.08.2019" />
            </FormRow>
            <FormRow $label="93px">
                <Caption htmlFor="saat">Fatura Saati</Caption>
                <TextBox id="saat" defaultValue="20:55:34" />
            </FormRow>
            <FormRow $label="93px" $apart $loose>
                <Caption htmlFor="irstarih">İrsaliye Tarihi</Caption>
                <DateField id="irstarih" value="02.08.2019" />
            </FormRow>
            <FormRow $label="93px">
                <Caption htmlFor="irsno">İrsaliye No</Caption>
                <TextBox id="irsno" />
            </FormRow>
        </HeadGroup>
        <FoldGap />
        <Fold type="button" aria-label="Özel"><Chevron /></Fold>
        <Letters word="ÖZEL" width="23px" top="36px" />
    </Head>
)

const GoodsList = () => (
    <ListArea>
        <ListActions>
            <CartButton type="button">LİSTEYE EKLE<em>(F5)</em><Cart add /></CartButton>
            <CartButton type="button">LİSTEDEN SİL<em>(F7)</em><Cart /></CartButton>
            <StockButton type="button">Stok Kartı <Bitmap rows={stockCard} /></StockButton>
        </ListActions>
        <ListBox>
            <TableClip>
                <GoodsTable>
                    <colgroup>
                        <col width="12" />
                        {columns.map(column => <col key={column.title} width={column.width} />)}
                    </colgroup>
                    <thead>
                        <tr>
                            <HeadCell />
                            {columns.map(column => (
                                <HeadCell key={column.title} $color={column.color}>{column.title}</HeadCell>
                            ))}
                        </tr>
                    </thead>
                    <tbody>
                        {goods.map((row, i) => (
                            <tr key={row[6]}>
                                <Marker>{i === 1 && <svg width="7" height="12"><path d="M0 0 7 6 0 12Z" /></svg>}</Marker>
                                {row.map((text, j) => (
                                    <Cell key={columns[j].title} $align={columns[j].align} $bold={columns[j].bold} $fill={columns[j].fill}>
                                        {text}
                                    </Cell>
                                ))}
                            </tr>
                        ))}
                    </tbody>
                </GoodsTable>
            </TableClip>
            <ScrollColumn>
                <ScrollButton type="button" aria-label="Yukarı"><Triangle points="M0 6 3.500 2 7 6Z" /></ScrollButton>
                <Gap />
                <Thumb $vertical>
                    <svg width="7" height="8"><path d="M0 1h7M0 4h7M0 7h7" stroke="#666" /></svg>
                </Thumb>
                <ScrollButton type="button" aria-label="Aşağı"><Triangle points="M0 2 3.500 6 7 2Z" /></ScrollButton>
            </ScrollColumn>
            <ScrollRow>
                <ScrollButton type="button" aria-label="Sola"><Triangle points="M6 0 2 3.500 6 7Z" /></ScrollButton>
                <Thumb />
                <Gap />
                <ScrollButton type="button" aria-label="Sağa"><Triangle points="M2 0 6 3.500 2 7Z" /></ScrollButton>
            </ScrollRow>
            <ScrollRow />
            <FloatPanel>
                <PictureButton type="button" $width="97px" $right="38px">Stok<br />Miktar<br />Grupları<BagRing /></PictureButton>
                <PictureButton type="button" $width="87px" $right="19px">Aktif<br />Satırı<br />Clonla<ClonePages /></PictureButton>
                <BarcodeForm>
                    <label htmlFor="barkod">Barkod Numarası :</label>
                    <Barcode />
                    <input id="barkod" />
                    <RaisedButton type="button">Bul &amp; Ekle</RaisedButton>
                </BarcodeForm>
            </FloatPanel>
        </ListBox>
    </ListArea>
)

const TotalsArea = () => (
    <Totals>
        <Letters word="TOPLAM" width="30px" top="27px" />
        <Sums>
            <Sum id="ara" name="Ara Toplam :" value="1.200,00" />
            <Sum id="isk" name="Ürün İsk. Tutarı :" value="0,00" />
            <DiscountRow>
                <Tick type="checkbox" id="iskonto" />
                <label htmlFor="iskonto">Fatura Altı İskontosu yap</label>
                <Unit>TL</Unit>
            </DiscountRow>
            <Sum id="alt" name="Alt Toplam :" value="1.200,00" />
            <Sum id="kdvtutar" name="Kdv Tutarı :" value="216,00">
                <SumSelect>
                    <Select label="Kdv" options={['Hariç', 'Dahil']} value="Hariç" width="67px" />
                </SumSelect>
            </Sum>
            <Sum id="genel" name="Genel Toplam :" value="1.416,00" />
        </Sums>
        <Summary>
            <Terms>
                <dt>Nakit % Toplam:</dt><dd>1.416,000</dd><dd>TL</dd>
                <dt>Vadeli % Toplam:</dt><dd>0,000</dd><dd>TL</dd>
            </Terms>
            <Grand>1.416,00</Grand>
        </Summary>
        <Fold type="button" $lift="44px" aria-label="Not"><Chevron /></Fold>
        <Letters word="NOT" width="23px" top="40px" />
    </Totals>
)

const App = () => (
    <>
        <GlobalStyle />
        <Window>
            <TitleBar>
                <AppIcon />
                <WindowTitle>YAYLASOFT TEKSTİL TAKİP PROGRAMI v3.06</WindowTitle>
                <WindowButtons>
                    <WindowButton type="button" aria-label="Küçült">
                        <svg width="13" height="6"><rect x="1" y="1" width="11" height="4" rx="1" fill="#fff" stroke="#4f5966" /></svg>
                    </WindowButton>
                    <WindowButton type="button" aria-label="Büyüt">
                        <svg width="12" height="10"><path d="M1 1H11V9H1ZM4 4V6H8V4Z" fill="#fff" stroke="#4f5966" /></svg>
                    </WindowButton>
                    <WindowButton type="button" $close aria-label="Kapat">
                        <svg width="13" height="11"><path d="M2 1.500 11 9.500M11 1.500 2 9.500" stroke="#643" strokeWidth="4" /><path d="M2 1.500 11 9.500M11 1.500 2 9.500" stroke="#fff" strokeWidth="2.500" /></svg>
                    </WindowButton>
                </WindowButtons>
            </TitleBar>
            <Client>
                <Banner>
                    <BannerLeft />
                    <BannerTitle>SATIŞ FATURASI</BannerTitle>
                    <PdfButton type="button" aria-label="PDF"><BannerRight /></PdfButton>
                </Banner>
                <Body>
                    <Main>
                        <InvoiceHead />
                        <GoodsList />
                        <StatusLine>
                            <GearButton type="button" aria-label="Ayarlar"><Gear /></GearButton>
                            <StatusCell>
                                <Tick type="checkbox" id="muhasebe" $left="5px" />
                                <label htmlFor="muhasebe">Muhasebelendi</label>
                            </StatusCell>
                            <StatusCell>Listelenen Kayıt Sayısı = 2&nbsp; -&nbsp; Listedeki Parça Sayısı = 2</StatusCell>
                            <StatusCell><a href="#panel">Paneli Gizle (F12)</a></StatusCell>
                            <StatusCell />
                        </StatusLine>
                        <TotalsArea />
                        <Toolbar>
                            <ToolButton type="button" $bare aria-label="İlk"><FastArrow /></ToolButton>
                            <ToolButton type="button" $bare aria-label="Önceki"><Bitmap rows={arrowLeft} /></ToolButton>
                            <ToolButton type="button"><Bitmap rows={newPage} />Yeni Kayıt (F4)</ToolButton>
                            <ToolButton type="button" disabled><Bitmap rows={check} />Kaydet (F2)</ToolButton>
                            <ToolButton type="button" disabled><Bitmap rows={cancel} />İptal Et</ToolButton>
                            <ToolButton type="button"><Bitmap rows={edit} />Düzenle</ToolButton>
                            <ToolButton type="button"><Bitmap rows={erase} />Kaydı Sil</ToolButton>
                            <ToolButton type="button" $bare aria-label="Sonraki"><Bitmap rows={mirror(arrowLeft)} /></ToolButton>
                            <ToolButton type="button" $bare aria-label="Son"><FastArrow flip /></ToolButton>
                        </Toolbar>
                    </Main>
                    <Side>
                        {sideItems.map((item, i) => (
                            <SideItem key={i} type="button">{item.icon}<span>{item.text}</span></SideItem>
                        ))}
                        <ExitButton type="button"><Door />ÇIKIŞ</ExitButton>
                    </Side>
                </Body>
            </Client>
        </Window>
    </>
)

export default App
